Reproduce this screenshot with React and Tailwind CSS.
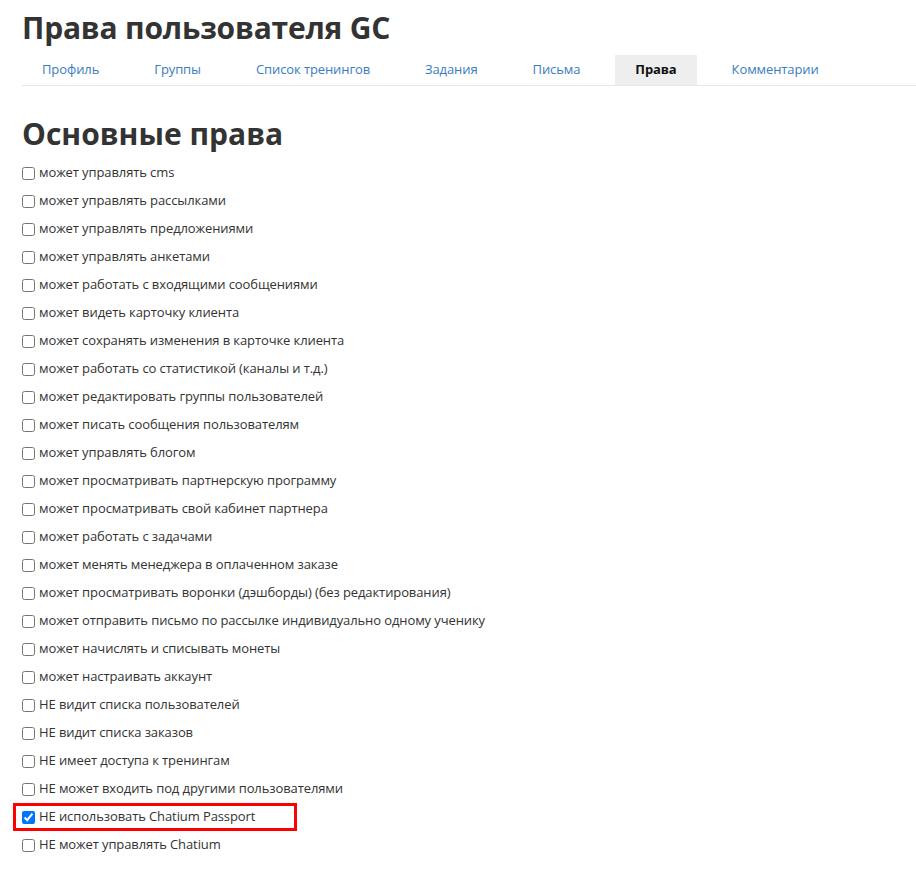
import React from 'react';

// Список прав пользователя
const rights = [
  'может управлять cms',
  'может управлять рассылками',
  'может управлять предложениями',
  'может управлять анкетами',
  'может работать с входящими сообщениями',
  'может видеть карточку клиента',
  'может сохранять изменения в карточке клиента',
  'может работать со статистикой (каналы и т.д.)',
  'может редактировать группы пользователей',
  'может писать сообщения пользователям',
  'может управлять блогом',
  'может просматривать партнерскую программу',
  'может просматривать свой кабинет партнера',
  'может работать с задачами',
  'может менять менеджера в оплаченном заказе',
  'может просматривать воронки (дэшборды) (без редактирования)',
  'может отправить письмо по рассылке индивидуально одному ученику',
  'может начислять и списывать монеты',
  'может настраивать аккаунт',
  'НЕ видит списка пользователей',
  'НЕ видит списка заказов',
  'НЕ имеет доступа к тренингам',
  'НЕ может входить под другими пользователями',
  'НЕ использовать Chatium Passport',
  'НЕ может управлять Chatium',
];

const tabs = ['Профиль', 'Группы', 'Список тренингов', 'Задания', 'Письма', 'Права', 'Комментарии'];

function RightRow({ label, checked, highlighted }) {
  return (
    <label
      className={
        'flex items-center h-[28px] text-[13px] text-[#333] tracking-[-0.1px] ' +
        (highlighted ? 'border-[3px] border-[#ff0000] -ml-[9px] pl-[6px] w-[284px]' : '')
      }
    >
      <input type="checkbox" defaultChecked={checked} className="m-0 mr-[4px] w-[13px] h-[13px]" />
      <span>{label}</span>
    </label>
  );
}

export default function App() {
  return (
    <div className="min-h-screen bg-white pl-[22px] pt-[10px]" style={{ fontFamily: '"Open Sans", sans-serif' }}>
      <h1 className="text-[30px] font-bold text-[#333] leading-[36px] tracking-[-0.2px]">Права пользователя GC</h1>

      {/* Вкладки */}
      <div className="mt-[9px] flex gap-[15px] border-b border-[#e8e8e8]">
        {tabs.map(tab => (
          <div
            key={tab}
            className={
              'px-[20px] h-[30px] flex items-center text-[13px] tracking-[-0.1px] ' +
              (tab === 'Права' ? 'bg-[#eeeeee] font-bold text-[#111]' : 'text-[#3a7dc0]')
            }
          >
            {tab}
          </div>
        ))}
      </div>

      <h2 className="mt-[28px] text-[30px] font-bold text-[#333] leading-[40px]">Основные права</h2>

      <div className="mt-[5px] flex flex-col">
        {rights.map(r => (
          <RightRow
            key={r}
            label={r}
            checked={r === 'НЕ использовать Chatium Passport'}
            highlighted={r === 'НЕ использовать Chatium Passport'}
          />
        ))}
      </div>
    </div>
  );
}
